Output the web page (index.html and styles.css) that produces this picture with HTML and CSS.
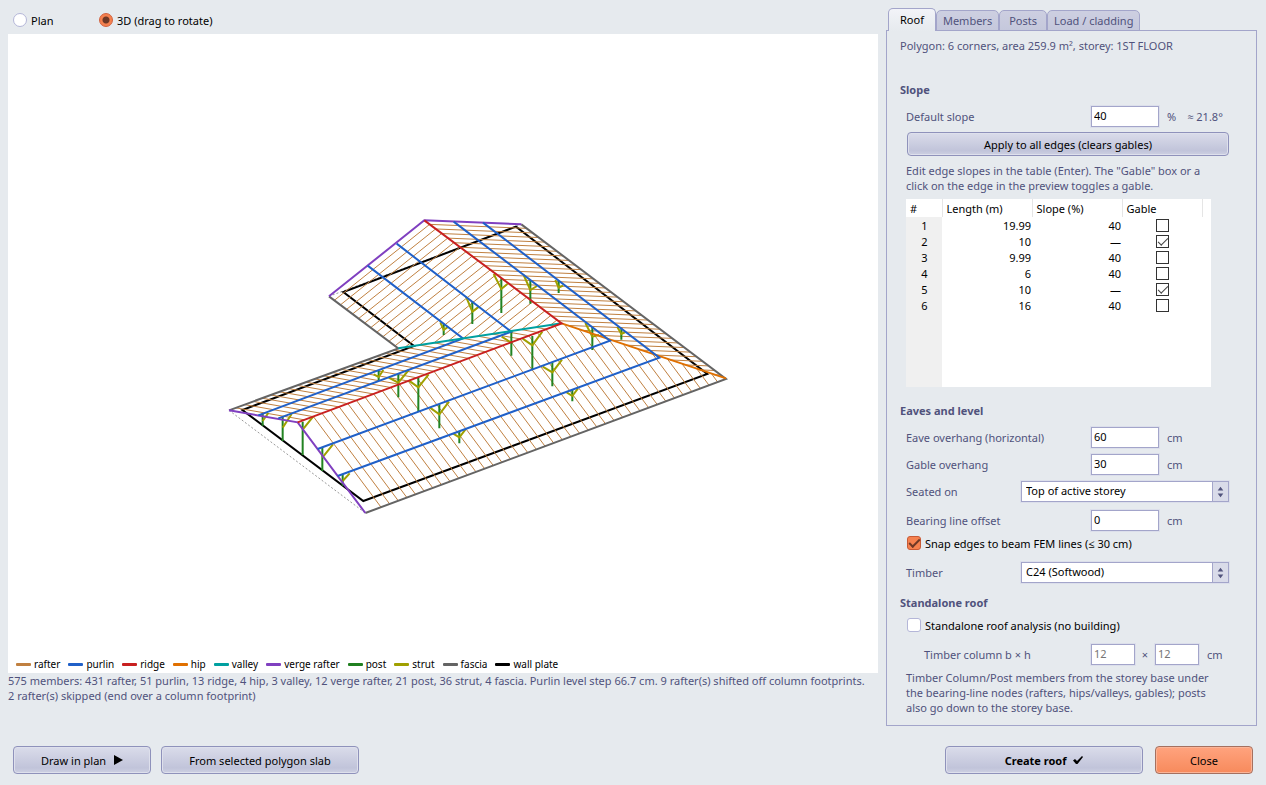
FILE: index.html
```html
<!DOCTYPE html>
<html lang="en">
<head>
<meta charset="utf-8">
<title>Roof</title>
<link rel="stylesheet" href="styles.css">
</head>
<body>
<main class="main">
  <section class="preview">
    <div class="modes">
      <label class="option mode"><input class="radio" type="radio" name="view"> Plan</label>
      <label class="option"><input class="radio" type="radio" name="view" checked> 3D (drag to rotate)</label>
    </div>
    <div class="canvas">
      <svg class="model" viewBox="-651 -543 2610 1863" role="img" aria-label="3D roof preview">
        <path class="base" d="M12 586 421 894M312 244 889 28"/>
        <path class="plate" d="M415 858 1447 477 873 35 355 231 567 393 52 585Z"/>
        <path class="rafter" id="rafters"/>
        <path class="fascia" d="M12 586 520 400 312 244M889 28 1503 492 421 894"/>
        <path class="post" d="M113 594V632M173 606V678M233 620V720M292 698V768M353 778V812M461 468V498M520 478V547M580 486V588M643 568V640M703 648V685M859 350V422M922 363V463M982 442V514M1042 522V559M656 326V360M742 258V327M829 190V294M916 195V266M1001 198V234M1102 336V405M1189 338V374"/>
        <path class="strut" d="M113 618 130 594M173 638 200 597M233 644 265 604M292 728 324 688M353 798 374 775M446 478 461 486 475 465M491 488 520 503 551 465M551 496 580 517 611 478M615 578 643 598 672 560M685 656 703 667 721 644M830 365 859 383M893 371 922 391 952 350M953 455 982 472 1011 434M1025 532 1042 543 1059 520M646 322 656 345 670 335M723 245 742 290 762 275M806 177 829 222 847 207M896 180 916 225 936 213M991 195 1001 218 1014 212M1081 324 1102 365 1122 360M1177 336 1189 357 1200 352"/>
        <path class="verge" d="M312 244 598 16 889 28M12 586 218 622 421 894"/>
        <path class="hip" d="M1010 325 1503 490"/>
        <path class="purlin" d="M515 86 859 350 160 610M428 152 714 370 100 601M686 20 1155 377 278 702M774 23 1303 428 338 783"/>
        <path class="valley" d="M520 400 1010 325"/>
        <path class="ridge" d="M598 16 1010 325 218 622"/>
      </svg>
      <ul class="legend">
        <li class="key key-rafter">rafter</li>
        <li class="key key-purlin">purlin</li>
        <li class="key key-ridge">ridge</li>
        <li class="key key-hip">hip</li>
        <li class="key key-valley">valley</li>
        <li class="key key-verge">verge rafter</li>
        <li class="key key-post">post</li>
        <li class="key key-strut">strut</li>
        <li class="key key-fascia">fascia</li>
        <li class="key key-plate">wall plate</li>
      </ul>
    </div>
    <p class="status">575 members: 431 rafter, 51 purlin, 13 ridge, 4 hip, 3 valley, 12 verge rafter, 21 post, 36 strut, 4 fascia. Purlin level step 66.7 cm. 9 rafter(s) shifted off column footprints.<br>2 rafter(s) skipped (end over a column footprint)</p>
  </section>

  <section class="side">
    <div class="tabs" role="tablist">
      <button class="tab tab-active" role="tab" aria-selected="true">Roof</button>
      <button class="tab" role="tab">Members</button>
      <button class="tab tab-posts" role="tab">Posts</button>
      <button class="tab" role="tab">Load / cladding</button>
    </div>
    <div class="panel">
      <p class="info">Polygon: 6 corners, area 259.9 m², storey: 1ST FLOOR</p>

      <h2 class="heading heading-slope">Slope</h2>
      <div class="row">
        <label class="name" for="slope">Default slope</label>
        <input class="field" id="slope" value="40">
        <span class="unit">%</span><span class="approx">≈ 21.8°</span>
      </div>
      <button class="button apply">Apply to all edges (clears gables)</button>
      <p class="hint">Edit edge slopes in the table (Enter). The "Gable" box or a<br>click on the edge in the preview toggles a gable.</p>
      <div class="sheet">
        <table class="edges">
          <thead><tr><th class="c-num">#</th><th class="c-len">Length (m)</th><th class="c-len">Slope (%)</th><th class="c-gable">Gable</th><th></th></tr></thead>
          <tbody>
            <tr><td>1</td><td>19.99</td><td>40</td><td><input class="tick" type="checkbox" aria-label="Gable 1"></td><td></td></tr>
            <tr><td>2</td><td>10</td><td>—</td><td><input class="tick" type="checkbox" aria-label="Gable 2" checked></td><td></td></tr>
            <tr><td>3</td><td>9.99</td><td>40</td><td><input class="tick" type="checkbox" aria-label="Gable 3"></td><td></td></tr>
            <tr><td>4</td><td>6</td><td>40</td><td><input class="tick" type="checkbox" aria-label="Gable 4"></td><td></td></tr>
            <tr><td>5</td><td>10</td><td>—</td><td><input class="tick" type="checkbox" aria-label="Gable 5" checked></td><td></td></tr>
            <tr><td>6</td><td>16</td><td>40</td><td><input class="tick" type="checkbox" aria-label="Gable 6"></td><td></td></tr>
          </tbody>
        </table>
      </div>

      <h2 class="heading heading-eaves">Eaves and level</h2>
      <div class="row">
        <label class="name" for="eave">Eave overhang (horizontal)</label>
        <input class="field" id="eave" value="60">
        <span class="unit">cm</span>
      </div>
      <div class="row row-tight">
        <label class="name" for="gable">Gable overhang</label>
        <input class="field" id="gable" value="30">
        <span class="unit">cm</span>
      </div>
      <div class="row row-tight">
        <label class="name name-short" for="seat">Seated on</label>
        <span class="combo">
          <select class="select" id="seat"><option>Top of active storey</option></select>
          <svg class="arrows" viewBox="0 0 16 20" aria-hidden="true"><path d="M5 9 8 5 11 9ZM5 12H11L8 16Z"/></svg>
        </span>
      </div>
      <div class="row">
        <label class="name" for="offset">Bearing line offset</label>
        <input class="field" id="offset" value="0">
        <span class="unit">cm</span>
      </div>
      <label class="option snap"><input class="check" type="checkbox" checked> Snap edges to beam FEM lines (≤ 30 cm)</label>
      <div class="row row-loose">
        <label class="name name-short" for="timber">Timber</label>
        <span class="combo">
          <select class="select" id="timber"><option>C24 (Softwood)</option></select>
          <svg class="arrows" viewBox="0 0 16 20" aria-hidden="true"><path d="M5 9 8 5 11 9ZM5 12H11L8 16Z"/></svg>
        </span>
      </div>

      <h2 class="heading heading-alone">Standalone roof</h2>
      <label class="option alone"><input class="check" type="checkbox"> Standalone roof analysis (no building)</label>
      <div class="row row-loose">
        <label class="name name-inset" for="colb">Timber column b × h</label>
        <input class="field field-small" id="colb" value="12" disabled>
        <span class="times">×</span>
        <input class="field field-small" aria-label="Column h" value="12" disabled>
        <span class="unit">cm</span>
      </div>
      <p class="hint note">Timber Column/Post members from the storey base under<br>the bearing-line nodes (rafters, hips/valleys, gables); posts<br>also go down to the storey base.</p>
    </div>
  </section>
</main>
<footer class="footer">
  <button class="button draw">Draw in plan <svg class="glyph" viewBox="0 0 10 10" aria-hidden="true"><path d="M1 0 10 5 1 10Z"/></svg></button>
  <button class="button wide">From selected polygon slab</button>
  <span class="spacer"></span>
  <button class="button wide create">Create roof <svg class="glyph" viewBox="0 0 10 10" aria-hidden="true"><path d="M0 5.500 2 4 4 6 9 1 10 2 4.500 9 3 9Z"/></svg></button>
  <button class="button close">Close</button>
</footer>
<script src="rafters.js"></script>
</body>
</html>
```

FILE: rafters.js
```js
// Each roof plane: rafters start along `from`, run in direction `dir`
// and stop at the first of the `ends` segments that they meet.
const ridgeA = [[598, 16], [1010, 325]];
const ridgeB = [[218, 622], [1010, 325]];
const hip = [[1010, 325], [1503, 492]];
const valley = [[520, 400], [1010, 325]];

const planes = [
  { from: [[421, 894], [1503, 492]], dir: [-203, -272], ends: [ridgeB, hip], first: 47, step: 25.9 },
  { from: [[889, 28], [1503, 492]], dir: [-291, -12], ends: [ridgeA, hip], first: 16, step: 18.2 },
  { from: ridgeA, dir: [-286, 228], ends: [[[312, 244], [520, 400]], valley], first: 16, step: 18.2 },
  { from: ridgeB, dir: [-206, -36], ends: [[[12, 586], [520, 400]], valley], first: 20, step: 25.9 },
];

function meet(p, d, [a, b]) {
  const ex = b[0] - a[0], ey = b[1] - a[1];
  const det = d[0] * ey - d[1] * ex;
  const qx = a[0] - p[0], qy = a[1] - p[1];
  const t = (qx * ey - qy * ex) / det;
  const u = (qx * d[1] - qy * d[0]) / det;
  return t > 0 && u >= -0.01 && u <= 1.01 ? t : Infinity;
}

let path = "";
for (const { from: [a, b], dir, ends, first, step } of planes) {
  const slope = (b[1] - a[1]) / (b[0] - a[0]);
  for (let x = a[0] + first; x < b[0] - 4; x += step) {
    const p = [x, a[1] + (x - a[0]) * slope];
    const t = Math.min(...ends.map((e) => meet(p, dir, e)));
    if (t < 2) {
      path += `M${p[0].toFixed(1)} ${p[1].toFixed(1)}L${(p[0] + dir[0] * t).toFixed(1)} ${(p[1] + dir[1] * t).toFixed(1)}`;
    }
  }
}
document.getElementById("rafters").setAttribute("d", path);
```

FILE: styles.css
```css
* { box-sizing: border-box; }
body {
  margin: 0;
  min-height: 100vh;
  display: flex;
  flex-direction: column;
  background: #e6eaee;
  color: #50527c;
  font: 11px/15px "Noto Sans", "Open Sans", sans-serif;
}
button, input, select { font: inherit; }
p, h2, ul { margin: 0; padding: 0; }

.main { flex: 1; display: flex; gap: 8px; padding: 0 9px 0 8px; }
.preview { flex: 1; min-width: 0; display: flex; flex-direction: column; }
.modes { display: flex; height: 34px; padding: 6px 0 0 5px; }
.mode { width: 86px; }
.option { display: flex; align-items: center; gap: 4px; color: #000; }
.radio, .check, .tick { appearance: none; margin: 0; flex: none; }
.radio {
  width: 14px; height: 14px;
  border: 1px solid #b4b6d8; border-radius: 50%;
  background: #fff;
}
.radio:checked {
  border-color: #d2603c;
  background: radial-gradient(circle, #6e3826 0 3px, #f5814f 4px);
}

.canvas { flex: 1; display: flex; flex-direction: column; background: #fff; }
.model { flex: 1; min-height: 0; width: 100%; fill: none; stroke-width: 6; }
.base { stroke: #999; stroke-width: 3; stroke-dasharray: 6 6; }
.plate { stroke: #000; }
.rafter { stroke: #c08040; stroke-width: 3; }
.fascia { stroke: #646464; }
.post { stroke: #228322; }
.strut { stroke: #a0a000; }
.verge { stroke: #8040c0; }
.hip { stroke: #e07000; }
.purlin { stroke: #2060c8; }
.valley { stroke: #00a0a0; }
.ridge { stroke: #c82020; }

.legend { display: flex; gap: 8px; height: 18px; padding-left: 8px; list-style: none; font-size: 10px; line-height: 18px; color: #000; }
.key { display: flex; align-items: center; gap: 3px; white-space: nowrap; }
.key::before { content: ""; width: 15px; height: 3px; border-radius: 1px; background: currentColor; }
.key-rafter::before { background: #c08040; }
.key-purlin::before { background: #2060c8; }
.key-ridge::before { background: #c82020; }
.key-hip::before { background: #e07000; }
.key-valley::before { background: #00a0a0; }
.key-verge::before { background: #8040c0; }
.key-post::before { background: #208020; }
.key-strut::before { background: #a0a000; }
.key-fascia::before { background: #646464; }
.status { min-height: 53px; white-space: nowrap; }

.side { width: 371px; flex: none; display: flex; flex-direction: column; padding-top: 8px; }
.tabs { display: flex; align-items: flex-end; height: 23px; padding-left: 2px; margin-bottom: -1px; position: relative; }
.tab {
  height: 21px; padding: 0 6px;
  border: 1px solid #a3a5ca; border-radius: 5px 5px 0 0;
  background: linear-gradient(#cdcfe1, #c5c8dc);
  color: #50527c; line-height: 18px;
}
.tab-posts { padding: 0 9px; }
.tab-active { height: 23px; padding: 0 11px; border-bottom: 0; background: linear-gradient(#f2f3f8, #e6eaee); color: #000; }
.panel { flex: 1; padding: 7px 12px 8px 13px; border: 1px solid #a3a5ca; display: flex; flex-direction: column; }
.info { line-height: 16px; }
.heading { font-size: 11px; line-height: 16px; font-weight: 700; }
.heading-slope { margin-top: 28px; }
.heading-eaves { margin-top: 16px; }
.heading-alone { margin-top: 12px; }
.row { display: flex; align-items: center; height: 22px; margin: 7px 0 0 6px; }
.row-tight { margin-top: 5px; }
.row-loose { margin-top: 10px; }
.name { width: 185px; }
.name-short { width: 115px; }
.name-inset { padding-left: 18px; }
.field {
  width: 68px; height: 21px; padding: 0 2px 2px;
  border: 1px solid #a3a5ca; outline: 1px solid #dcdfeb;
  background: #fff; color: #000;
}
.field-small { width: 44px; }
.field:disabled { color: #757575; }
.unit { margin-left: 8px; }
.approx { margin-left: 11px; }
.times { width: 20px; text-align: center; }

.button {
  height: 28px; padding: 0;
  border: 1px solid #8f92bb; border-radius: 4px;
  background: linear-gradient(#dadcea, #c1c4da 80%, #cdd0e2);
  box-shadow: inset 0 0 0 1px #dee0ec;
  color: #000;
}
.apply { width: 322px; height: 24px; margin: 5px 0 0 7px; }
.hint { margin: 7px 0 0 6px; white-space: nowrap; }
.note { margin-top: 5px; }

.sheet {
  width: 305px; height: 188px; margin: 6px 0 0 6px;
  background: linear-gradient(90deg, #f0f0f0 36px, #fff 36px);
  color: #000;
}
.edges { width: 100%; table-layout: fixed; border-collapse: collapse; }
.edges th { height: 18px; padding: 0 4px; border-right: 1px solid #e5e5e5; background: #fff; text-align: left; font-weight: 400; }
.edges th:last-child { border-right: 0; }
.edges td { height: 16px; padding: 1px 1px 0 2px; text-align: right; line-height: 15px; }
.edges td:first-child, .edges td:nth-child(4) { text-align: center; }
.c-num { width: 36px; }
.c-len { width: 90px; }
.c-gable { width: 80px; }
.tick { display: block; width: 13px; height: 13px; margin: 0 auto; border: 1px solid #333; background: #fff; }
.tick:checked::before, .check:checked::before { content: ""; display: block; width: 9px; height: 4px; border: solid #444; border-width: 0 0 1px 1px; transform: translate(1px, 2px) rotate(-45deg); }
.check { width: 14px; height: 14px; border: 1px solid #b4b6d8; border-radius: 3px; background: #fff; }
.check:checked { border-color: #c85a36; background: #f5814f; }
.check:checked::before { border-color: #6e3826; border-width: 0 0 2px 2px; }
.snap { height: 16px; margin: 4px 0 0 7px; }
.alone { height: 16px; margin: 6px 0 0 7px; }

.combo { position: relative; width: 208px; height: 21px; }
.select {
  appearance: none; width: 100%; height: 21px; padding: 0 20px 2px 4px;
  border: 1px solid #a3a5ca; border-radius: 0; outline: 1px solid #dcdfeb;
  background: #fff; color: #000;
}
.arrows {
  position: absolute; top: 1px; right: 1px; width: 16px; height: 19px;
  border-left: 1px solid #a3a5ca; background: #d9dbe9; fill: #50527c; pointer-events: none;
}

.footer { display: flex; padding: 20px 13px 11px; }
.draw { width: 138px; margin-right: 10px; }
.wide { width: 198px; }
.spacer { flex: 1; }
.glyph { width: 10px; height: 10px; margin-left: 4px; }
.create { margin-right: 12px; font-weight: 700; }
.close { width: 98px; border-color: #a5705f; background: linear-gradient(#ffa37e, #f78a5c); box-shadow: inset 0 0 0 1px #fbb497; }
```
